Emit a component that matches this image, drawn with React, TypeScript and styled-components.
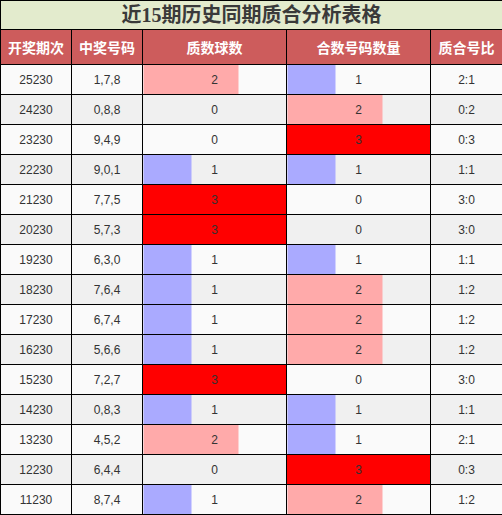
import styled, { createGlobalStyle } from "styled-components";

const GlobalStyle = createGlobalStyle`
  body {
    margin: 0;
    background: #ffffff;
  }
`;

const Table = styled.table`
  width: 502px;
  border-collapse: collapse;
  table-layout: fixed;
  font-family: "Liberation Sans", "Noto Sans CJK SC", sans-serif;
  font-size: 12px;
  color: #333333;
`;

const TitleCell = styled.th`
  height: 28px;
  padding: 0;
  border: 1px solid #000;
  background: #e3ebcd;
  color: #3a3a3a;
  font-family: "Liberation Serif", "Noto Sans CJK SC", serif;
  font-size: 20px;
  font-weight: bold;
  line-height: 28px;
`;

const HeadCell = styled.th`
  height: 34px;
  padding: 0;
  border: 1px solid #000;
  background: #cd5c5c;
  color: #ffffff;
  font-family: "Noto Sans CJK SC", sans-serif;
  font-size: 14px;
  font-weight: bold;
`;

const Row = styled.tr<{ $even: boolean }>`
  background: ${(p) => (p.$even ? "#f0f0f0" : "#fafafa")};
`;

const Cell = styled.td`
  height: 29px;
  padding: 0;
  border: 1px solid #000;
  text-align: center;
`;

const barColors = ["transparent", "#aaaaff", "#ffaaaa", "#ff0000"];

const BarCell = styled(Cell)<{ $n: number }>`
  background: ${(p) =>
    p.$n === 0
      ? "transparent"
      : `linear-gradient(to right, ${barColors[p.$n]} 0, ${barColors[p.$n]} ${(p.$n / 3) * 100}%, transparent ${(p.$n / 3) * 100}%)`};
`;

const rows: [string, string, number, number][] = [
  ["25230", "1,7,8", 2, 1],
  ["24230", "0,8,8", 0, 2],
  ["23230", "9,4,9", 0, 3],
  ["22230", "9,0,1", 1, 1],
  ["21230", "7,7,5", 3, 0],
  ["20230", "5,7,3", 3, 0],
  ["19230", "6,3,0", 1, 1],
  ["18230", "7,6,4", 1, 2],
  ["17230", "6,7,4", 1, 2],
  ["16230", "5,6,6", 1, 2],
  ["15230", "7,2,7", 3, 0],
  ["14230", "0,8,3", 1, 1],
  ["13230", "4,5,2", 2, 1],
  ["12230", "6,4,4", 0, 3],
  ["11230", "8,7,4", 1, 2],
];

function App() {
  return (
    <>
      <GlobalStyle />
      <Table>
        <colgroup>
          <col style={{ width: 71 }} />
          <col style={{ width: 71 }} />
          <col style={{ width: 144 }} />
          <col style={{ width: 144 }} />
          <col style={{ width: 72 }} />
        </colgroup>
        <thead>
          <tr>
            <TitleCell colSpan={5}>近15期历史同期质合分析表格</TitleCell>
          </tr>
          <tr>
            <HeadCell>开奖期次</HeadCell>
            <HeadCell>中奖号码</HeadCell>
            <HeadCell>质数球数</HeadCell>
            <HeadCell>合数号码数量</HeadCell>
            <HeadCell>质合号比</HeadCell>
          </tr>
        </thead>
        <tbody>
          {rows.map(([issue, nums, prime, comp], i) => (
            <Row key={issue} $even={i % 2 === 1}>
              <Cell>{issue}</Cell>
              <Cell>{nums}</Cell>
              <BarCell $n={prime}>{prime}</BarCell>
              <BarCell $n={comp}>{comp}</BarCell>
              <Cell>
                {prime}:{comp}
              </Cell>
            </Row>
          ))}
        </tbody>
      </Table>
    </>
  );
}

export default App;
